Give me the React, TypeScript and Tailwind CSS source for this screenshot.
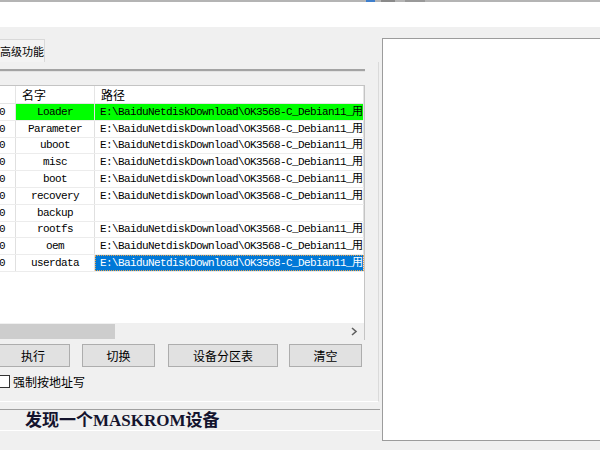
import React from "react";

const PATH = "E:\\BaiduNetdiskDownload\\OK3568-C_Debian11_用户资料\\Linux\\镜像\\update.img";

type Part = { name: string; path: string };

const partitions: Part[] = [
  { name: "Loader", path: PATH },
  { name: "Parameter", path: PATH },
  { name: "uboot", path: PATH },
  { name: "misc", path: PATH },
  { name: "boot", path: PATH },
  { name: "recovery", path: PATH },
  { name: "backup", path: "" },
  { name: "rootfs", path: PATH },
  { name: "oem", path: PATH },
  { name: "userdata", path: PATH },
];

const rowH = ["h-[17px]", "h-[17px]", "h-[16px]", "h-[17px]", "h-[17px]", "h-[17px]", "h-[17px]", "h-[16px]", "h-[17px]", "h-[17px]"];

const ui = "font-['Noto_Sans_CJK_SC',sans-serif]";
const mono = "font-['Liberation_Mono','Noto_Sans_CJK_SC',monospace]";

const Button: React.FC<{ label: string; className: string }> = ({ label, className }) => (
  <button
    className={`h-[23px] border border-[#adadad] bg-[#e1e1e1] text-[12px] leading-none text-black ${ui} ${className}`}
  >
    {label}
  </button>
);

const App: React.FC = () => {
  return (
    <div className="w-[600px] h-[450px] overflow-hidden bg-[#f0f0f0] flex flex-col">
      {/* edge of the window above */}
      <div className="h-[2px] bg-[#b4b4b4] flex">
        <div className="ml-[366px] w-[9px] bg-[#3f7fcc]" />
        <div className="ml-[6px] w-[14px] bg-[#8a8a8a]" />
        <div className="ml-[10px] w-[20px] bg-[#999999]" />
      </div>
      <div className="h-[25px] bg-white" />

      <div className="flex pt-[11px]">
        {/* left side: tab page */}
        <div className="w-[382px] flex flex-col">
          <div className="h-[24px] flex items-end">
            <div
              className={`h-[23px] w-[45px] border-t border-r border-[#d9d9d9] bg-[#f3f3f3] flex items-center text-[11px] leading-none text-black ${ui}`}
            >
              高级功能
            </div>
          </div>

          <div className="w-[379px] h-[340px] border-r border-b border-r-[#dadada] border-b-white flex flex-col">
            <div className="mt-[7px] w-[365px] h-[2px] bg-[#a3a3a3]" />
            <div className="w-[365px] h-[1px] bg-[#e2e2e2]" />

            {/* partition list */}
            <div className="mt-[13px] w-[365px] h-[255px] border-t border-r border-[#c4c4c4] bg-white flex flex-col overflow-hidden">
              <div className={`h-[18px] flex border-b border-[#e5e5e5] text-[12px] leading-none text-black ${ui}`}>
                <div className="w-[16px] border-r border-[#e5e5e5]" />
                <div className="w-[79px] border-r border-[#e5e5e5] flex items-center pl-[6px]">名字</div>
                <div className="w-[269px] border-r border-[#e5e5e5] flex items-center pl-[6px]">路径</div>
              </div>

              {partitions.map((p, i) => {
                const first = i === 0;
                const last = i === partitions.length - 1;
                return (
                  <div key={p.name} className={`${rowH[i]} flex border-b border-[#ececec] text-[11px] tracking-[-0.6px] text-black ${mono}`}>
                    <div className="w-[16px] border-r border-[#e0e0e0] overflow-hidden flex items-center justify-end pr-[10px]">
                      0
                    </div>
                    <div
                      className={`w-[79px] border-r border-[#e0e0e0] flex items-center justify-center ${first ? "bg-[#00ff00]" : ""}`}
                    >
                      {p.name}
                    </div>
                    <div
                      className={`w-[269px] border-r border-[#e0e0e0] overflow-hidden whitespace-nowrap flex items-center pl-[5px] ${
                        first ? "bg-[#00ff00]" : ""
                      } ${last ? "bg-[#0078d7] text-white outline-1 outline-dotted outline-[#e6a24a] -outline-offset-1" : ""}`}
                    >
                      {p.path}
                    </div>
                  </div>
                );
              })}

              <div className="flex-1" />

              {/* horizontal scroll bar */}
              <div className="h-[17px] bg-[#f0f0f0] flex items-center">
                <div className="w-[115px] h-[15px] bg-[#cdcdcd]" />
                <div className="flex-1" />
                <svg width="8" height="9" viewBox="0 0 8 9" className="mr-[6px]">
                  <path d="M2 1 L6 4.5 L2 8" fill="none" stroke="#606060" strokeWidth="1.6" />
                </svg>
              </div>
            </div>

            <div className="mt-[4px] flex">
              <Button label="执行" className="-ml-[4px] w-[74px]" />
              <Button label="切换" className="ml-[12px] w-[73px]" />
              <Button label="设备分区表" className="ml-[13px] w-[110px]" />
              <Button label="清空" className="ml-[11px] w-[73px]" />
            </div>

            <label className={`mt-[8px] h-[13px] flex items-center text-[12px] leading-none text-black ${ui}`}>
              <span className="-ml-[3px] w-[13px] h-[13px] border border-[#333333] bg-white" />
              <span className="ml-[3px]">强制按地址写</span>
            </label>
          </div>

          {/* status line */}
          <div className="mt-[7px] w-[380px] h-[1px] bg-[#a0a0a0]" />
          <div
            className="mt-[1px] h-[19px] pl-[25px] flex items-center text-[17px] leading-none font-bold text-[#14142e] font-['Liberation_Serif','Noto_Sans_CJK_SC',serif]"
          >
            发现一个MASKROM设备
          </div>
          <div className="w-[380px] h-[1px] bg-white" />
        </div>

        {/* right side: log box */}
        <div className="flex-1 h-[403px] border-l border-t border-b border-[#9c9c9c] bg-white" />
      </div>
    </div>
  );
};

export default App;
